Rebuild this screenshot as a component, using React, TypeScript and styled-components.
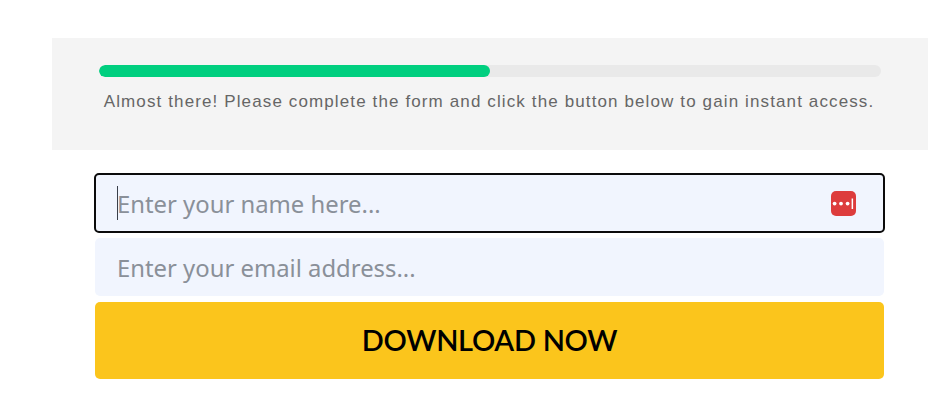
import React from "react";
import styled, { createGlobalStyle } from "styled-components";

const Global = createGlobalStyle`
  html, body { margin: 0; padding: 0; background: #fff; }
`;

const Page = styled.main`
  width: 876px;
  margin-left: 52px;
  padding-top: 38px;
`;

const ProgressPanel = styled.section`
  box-sizing: border-box;
  height: 112px;
  padding: 27px 47px 0;
  background: #f4f4f4;
  display: flex;
  flex-direction: column;
  align-items: stretch;
`;

const Track = styled.div`
  height: 12px;
  border-radius: 6px;
  background: #e9e9e9;
  overflow: hidden;
`;

const Fill = styled.div`
  height: 100%;
  border-radius: 6px;
  background: #00cf7f;
`;

const Hint = styled.p`
  margin: 15px 0 0;
  padding-right: 2px;
  font: 17px/20px "Liberation Sans", Arial, sans-serif;
  letter-spacing: 1.12px;
  color: #666;
  text-align: center;
  white-space: nowrap;
`;

const Form = styled.form`
  width: 789px;
  margin: 23px 0 0 43px;
  display: flex;
  flex-direction: column;
`;

const Field = styled.div<{ $focused?: boolean; $height: number; $gap: number }>`
  position: relative;
  box-sizing: border-box;
  height: ${(p) => p.$height}px;
  margin: 0 ${(p) => (p.$focused ? "-1px" : "0")} ${(p) => p.$gap}px;
  padding-left: ${(p) => (p.$focused ? "1px" : "0")};
  border-radius: 5px;
  background: #f1f5fe;
  border: 2px solid ${(p) => (p.$focused ? "#0b0b0b" : "transparent")};
  display: flex;
  align-items: center;
`;

const Input = styled.input`
  flex: 1;
  min-width: 0;
  height: 100%;
  box-sizing: border-box;
  padding: 2px 60px 0 20px;
  border: 0;
  outline: 0;
  background: transparent;
  font: 23.85px "Noto Sans", sans-serif;
  color: #333;
  &::placeholder {
    color: #8a9099;
    opacity: 1;
  }
`;

const Caret = styled.span`
  position: absolute;
  left: 21px;
  top: 11px;
  width: 1px;
  height: 34px;
  background: #3a3f4a;
`;

const ManagerBadge = styled.svg`
  position: absolute;
  right: 27px;
  top: 16px;
  width: 25px;
  height: 25px;
`;

const Submit = styled.button`
  height: 77px;
  padding: 0 0 3px;
  border: 0;
  border-radius: 5px;
  background: #fbc51c;
  color: #000;
  font: 600 29px "Lato", sans-serif;
  letter-spacing: -0.3px;
  cursor: pointer;
`;

export default function App() {
  const progress = 50;
  return (
    <Page>
      <Global />
      <ProgressPanel>
        <Track>
          <Fill style={{ width: `${progress}%` }} />
        </Track>
        <Hint>Almost there! Please complete the form and click the button below to gain instant access.</Hint>
      </ProgressPanel>
      <Form onSubmit={(e) => e.preventDefault()}>
        <Field $focused $height={60} $gap={5}>
          <Input type="text" placeholder="Enter your name here..." />
          <Caret />
          <ManagerBadge viewBox="0 0 25 25" aria-hidden="true">
            <rect width="25" height="25" rx="5" fill="#dd3c3c" />
            <circle cx="3.6" cy="12.6" r="1.9" fill="#fff" />
            <circle cx="10" cy="12.6" r="1.9" fill="#fff" />
            <circle cx="16.6" cy="12.6" r="1.9" fill="#fff" />
            <rect x="20.6" y="7.5" width="1.5" height="10.5" fill="#fff" />
          </ManagerBadge>
        </Field>
        <Field $height={58} $gap={6}>
          <Input type="email" placeholder="Enter your email address..." />
        </Field>
        <Submit type="submit">DOWNLOAD NOW</Submit>
      </Form>
    </Page>
  );
}
